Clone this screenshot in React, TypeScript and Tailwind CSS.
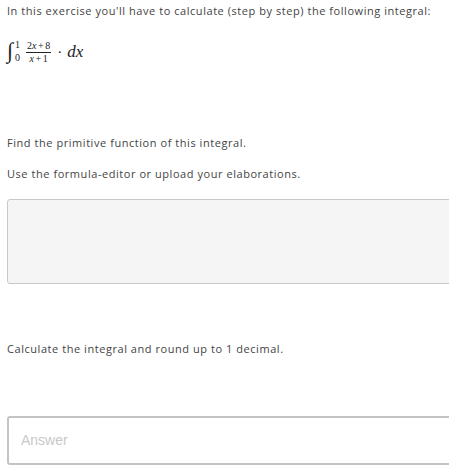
import React from "react";

export default function App() {
  const sans = { fontFamily: '"Open Sans", sans-serif', letterSpacing: "0.55px" };
  return (
    <div className="w-[449px] h-[469px] bg-white overflow-hidden text-[#444]" style={sans}>
      <div className="pl-[7px] pt-[3px]">
        <p className="text-[11px] leading-[16px] whitespace-nowrap">
          In this exercise you'll have to calculate (step by step) the following integral:
        </p>
        <div className="mt-[18px] h-[30px] flex items-center text-[#222]" style={{ fontFamily: '"Liberation Serif", serif', letterSpacing: 0 }}>
          <span className="text-[22px] leading-none italic -mt-[2px]">∫</span>
          <span className="flex flex-col text-[10px] leading-[10px] ml-[2px] -mt-[2px]">
            <span>1</span>
            <span className="mt-[3px]">0</span>
          </span>
          <span className="flex flex-col items-center ml-[6px] text-[10px] leading-[10px]">
            <span className="px-[1px] border-b border-[#222] pb-[1px]">2<i>x</i><span className="mx-[1.5px]">+</span>8</span>
            <span className="pt-[1px]"><i>x</i><span className="mx-[1.5px]">+</span>1</span>
          </span>
          <span className="ml-[6px] text-[15px]">·</span>
          <span className="ml-[5px] text-[17px] italic">dx</span>
        </div>
        <p className="mt-[68px] text-[11px] leading-[16px]">Find the primitive function of this integral.</p>
        <p className="mt-[15px] text-[11px] leading-[16px]">Use the formula-editor or upload your elaborations.</p>
        <div className="mt-[17px] h-[85px] w-[460px] bg-[#f5f5f5] border border-[#c8c8c8] rounded-[3px]" />
        <p className="mt-[57px] text-[11px] leading-[16px]">Calculate the integral and round up to 1 decimal.</p>
        <div className="mt-[59px] h-[49px] w-[460px] border-2 border-[#c4c4c4] rounded-[3px] flex items-center pl-[12px]">
          <span className="text-[14px] text-[#c8c8c8]" style={{ fontFamily: '"Liberation Sans", Arial, sans-serif', letterSpacing: 0 }}>Answer</span>
        </div>
      </div>
    </div>
  );
}
